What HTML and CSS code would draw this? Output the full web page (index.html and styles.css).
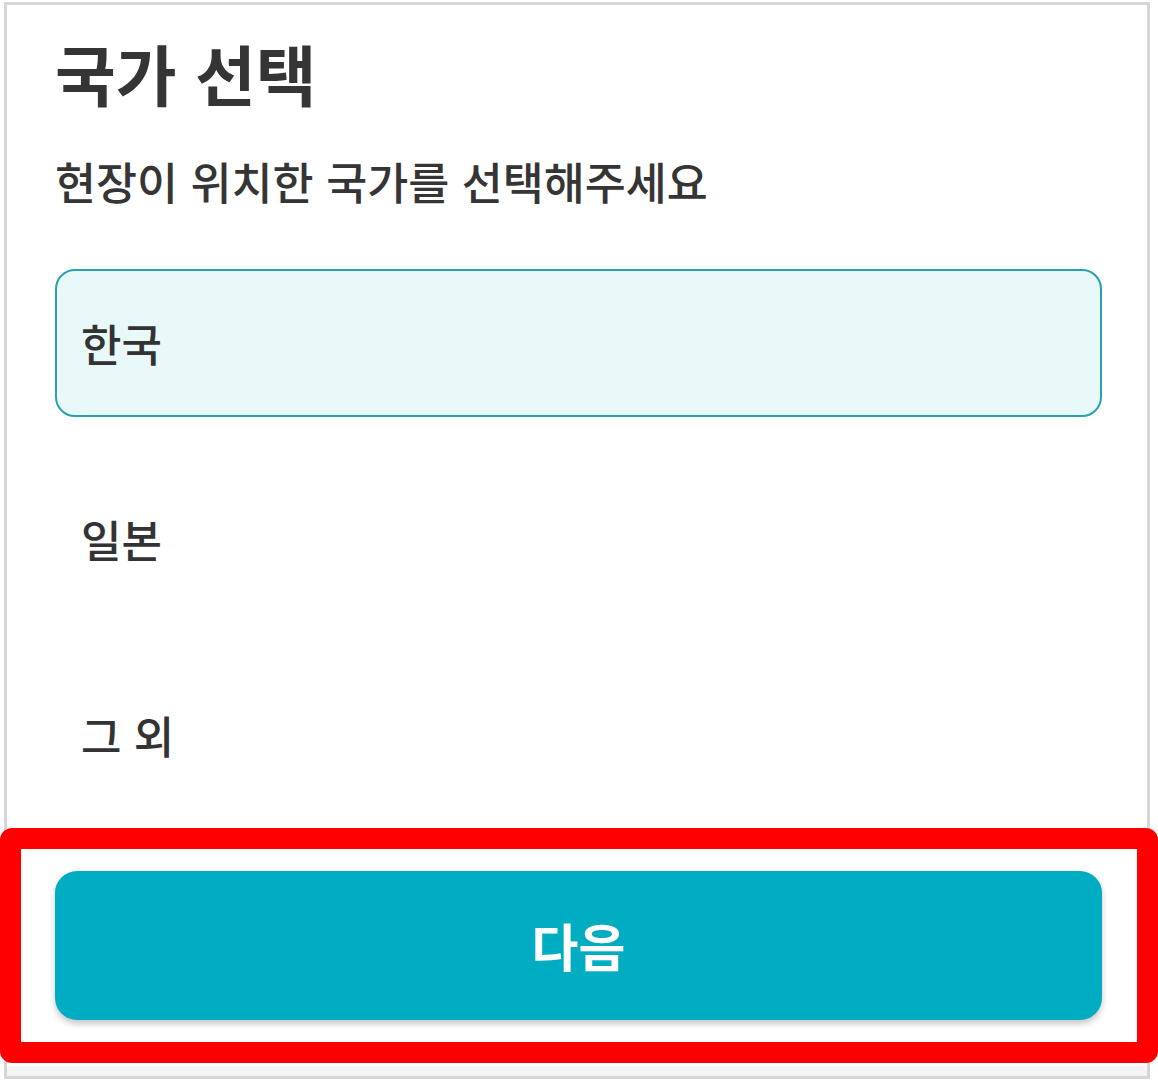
FILE: index.html
```html
<!DOCTYPE html>
<html lang="ko">
<head>
  <meta charset="UTF-8">
  <title>국가 선택</title>
  <link rel="stylesheet" href="styles.css">
</head>
<body>
  <div class="screen">
    <div class="content">
      <h1 class="title">국가 선택</h1>
      <p class="subtitle">현장이 위치한 국가를 선택해주세요</p>

      <ul class="options">
        <li class="option selected">한국</li>
        <li class="option">일본</li>
        <li class="option">그 외</li>
      </ul>

      <div class="actions">
        <button class="btn-next">다음</button>
      </div>
    </div>
    <div class="bottom-strip"></div>

    <!-- highlight box -->
    <div class="highlight"></div>
  </div>
</body>
</html>
```

FILE: styles.css
```css
body {
  margin: 0;
  font-family: "Noto Sans CJK KR", "Noto Sans", sans-serif;
  background-color: white;
}
.screen {
  position: relative;
  width: 1140px;
  height: 1071px;
  margin: 2px 0 0 4px;
  border: 3px solid #d6d6d6;
  background-color: white;
  display: flex;
  flex-direction: column;
}
.content {
  flex: 1;
  padding: 0 45px 0 48px;
  display: flex;
  flex-direction: column;
}
.title {
  margin: 28px 0 0 0;
  font-size: 66px;
  font-weight: bold;
  line-height: 1.2;
  color: #353535;
}
.subtitle {
  margin: 42px 0 0 0;
  font-size: 44.6px;
  font-weight: 500;
  line-height: 1.2;
  color: #353535;
}
.options {
  list-style: none;
  margin: 61px 0 0 0;
  padding: 0;
  display: flex;
  flex-direction: column;
  gap: 48px;
}
.option {
  height: 148px;
  box-sizing: border-box;
  padding: 0 24px;
  display: flex;
  align-items: center;
  font-size: 44px;
  font-weight: 500;
  color: #333;
  border: 2.5px solid transparent;
  border-radius: 20px;
}
.option.selected {
  background-color: #e9f8f9;
  border-color: #27a2b1;
}
.actions {
  margin-top: 62px;
}
.btn-next {
  display: block;
  width: 100%;
  height: 149px;
  border: none;
  border-radius: 22px;
  background-color: #00acc1;
  color: white;
  font-family: inherit;
  font-size: 51px;
  font-weight: bold;
  box-shadow: 0 4px 6px rgba(0, 0, 0, 0.22);
}
.bottom-strip {
  height: 10px;
  background-color: #f3f4f6;
}
.highlight {
  position: absolute;
  left: -7px;
  top: 823px;
  width: 1116px;
  height: 193px;
  border: 21px solid #ff0000;
  border-radius: 12px;
}
```
